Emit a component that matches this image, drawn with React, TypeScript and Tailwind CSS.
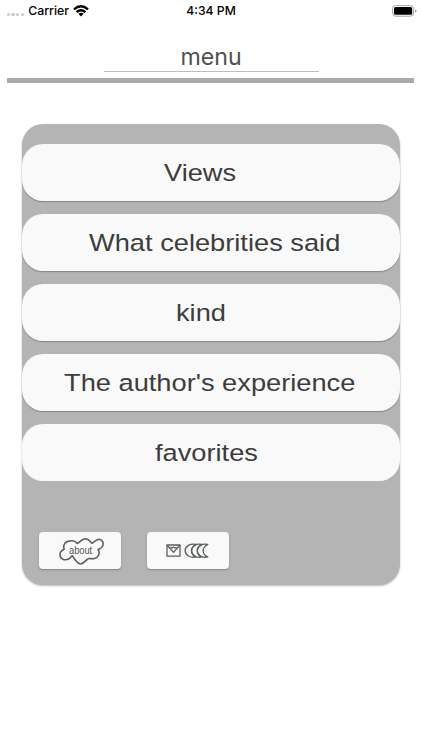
const items = [
  { label: 'Views', pad: 'pl-[141.5px]' },
  { label: 'What celebrities said', pad: 'pl-[67px]' },
  { label: 'kind', pad: 'pl-[153.5px]' },
  { label: "The author's experience", pad: 'pl-[42px]' },
  { label: 'favorites', pad: 'pl-[133px]' },
];

function Wifi() {
  return (
    <svg width="16" height="12" viewBox="0 0 16 12" fill="none" stroke="#000" strokeWidth="2.3">
      <path d="M1 4.4Q8-1.8 15 4.4" />
      <path d="M3.5 7.2Q8 3.2 12.5 7.2" />
      <path d="M8 11.4L5.4 8.8Q8 6.8 10.6 8.8Z" fill="#000" stroke="none" />
    </svg>
  );
}

function Battery() {
  return (
    <svg width="26" height="12" viewBox="0 0 26 12" fill="none">
      <rect x="0.6" y="0.6" width="21" height="10.6" rx="3" stroke="#a3a3a3" />
      <rect x="2" y="2.1" width="18.2" height="7.7" rx="1.5" fill="#000" />
      <path d="M23 4.2Q24.6 4.7 24.6 6T23 7.8Z" fill="#a3a3a3" />
    </svg>
  );
}

function Cloud() {
  return (
    <svg width="46" height="29" viewBox="0 0 46 29" fill="none" stroke="#59605e" strokeWidth="1.6" strokeLinejoin="round">
      <path d="M5.2 12C3.2 7.5 7.5 3.8 10.8 4.1C14 3.2 16.5 4.3 18.2 6.4C21 5.2 22.5 2 26 1.7C29.5 1.7 31.2 4.2 32.8 6.2C35.5 5.2 37 2.2 40 2.2C44 2.6 45 6.5 43.3 9.5C42.3 11.5 40.3 11.8 39 12.6C41.5 16 39.5 20.5 35.5 21.5C33 22.4 31 20.8 29 21.8C26.5 23.4 25 26.8 21.5 27C17.5 26.4 16 22 13.2 18.8C11 21.8 8 23.2 4.8 22.6C1 21.8 .2 17.5 1.8 14.7C3 13 4.5 13 5.2 12Z" />
      <text x="10" y="17" fontSize="10.4" textLength="23.2" lengthAdjust="spacingAndGlyphs" fill="#505655" stroke="none" fontFamily="Liberation Sans, Arial, sans-serif">about</text>
    </svg>
  );
}

function MailMoons() {
  return (
    <svg width="43" height="16" viewBox="0 0 43 16" fill="none" stroke="#59605e" strokeWidth="1.3" strokeLinejoin="round">
      <rect x="1" y="2" width="13" height="11.2" />
      <path d="M1 2L7.5 9.4L14 2" />
      <path d="M4.4 4.2L6 5.1L7.5 4.1L9 5.1L10.6 4.2" strokeWidth="1.2" />
      <path d="M30.2 1.5C24.2.1 19.1 3.3 19.1 7.7S24.2 15.3 30.2 13.9C23.9 10.8 23.9 4.6 30.2 1.5Z" />
      <path d="M36 1.5C30 .1 25.6 3.3 25.6 7.7S30 15.3 36 13.9C29.8 10.8 29.8 4.6 36 1.5Z" />
      <path d="M41.8 1.5C35.8.1 31.3 3.3 31.3 7.7S35.8 15.3 41.8 13.9C35.6 10.8 35.6 4.6 41.8 1.5Z" />
    </svg>
  );
}

export default function App() {
  return (
    <div className="h-[750px] w-[422px] overflow-hidden bg-white font-['Liberation_Sans',Arial,sans-serif]">
      <div className="grid h-5 grid-cols-[1fr_auto_1fr] items-center font-[Inter,sans-serif] text-[12.5px] font-medium leading-5 text-black">
        <div className="flex h-5 items-center pl-[6.5px]">
          <div className="mr-[4px] mt-[8px] flex gap-[1.5px]">
            {[0, 1, 2, 3].map((n) => (
              <span key={n} className="size-[3.3px] rounded-full bg-[#c9c9c9]" />
            ))}
          </div>
          <span className="mr-[4px] pt-[1px] text-[12.3px]">Carrier</span>
          <Wifi />
        </div>
        <div className="pt-[1px] text-[12.2px]">4:34 PM</div>
        <div className="flex justify-end pr-[4.5px]"><Battery /></div>
      </div>
      <header className="ml-[103.5px] mt-[20px] h-[32px] w-[215px] border-b-[1.5px] border-[#bdbdbd] pt-[0.5px] text-center font-[Inter,sans-serif] text-[23.2px] leading-[32px] text-[#505050]">
        menu
      </header>
      <div className="ml-[7.4px] mt-[5.5px] h-[5px] w-[407px] bg-[#aaa]" />
      <main className="ml-[22px] mt-[41px] h-[461px] w-[378px] rounded-[21px] bg-[#b4b4b4] pt-[20px] shadow-[0_1px_2px_#bbb]">
        <nav className="flex flex-col gap-[13px]">
          {items.map((item) => (
            <button key={item.label} className={`${item.pad} h-[57px] w-full rounded-[21px] bg-[#f9f9f9] text-left text-[24.3px] leading-[58px] whitespace-nowrap text-[#3d3d3d] shadow-[0_1px_1px_#858585] last:shadow-none`}>
              <span className="inline-block origin-left scale-x-[1.121]">{item.label}</span>
            </button>
          ))}
        </nav>
        <div className="mt-[51px] flex gap-[26px] pl-[16.5px]">
          <button className="flex h-[37px] w-[82px] items-center justify-center rounded-[4px] bg-[#f9f9f9] pl-[5px] pt-[2px] shadow-[0_1px_2px_#858585]">
            <Cloud />
          </button>
          <button className="flex h-[37px] w-[82px] items-center justify-center rounded-[4px] bg-[#f9f9f9] pt-[2px] shadow-[0_1px_2px_#858585]">
            <MailMoons />
          </button>
        </div>
      </main>
    </div>
  );
}
